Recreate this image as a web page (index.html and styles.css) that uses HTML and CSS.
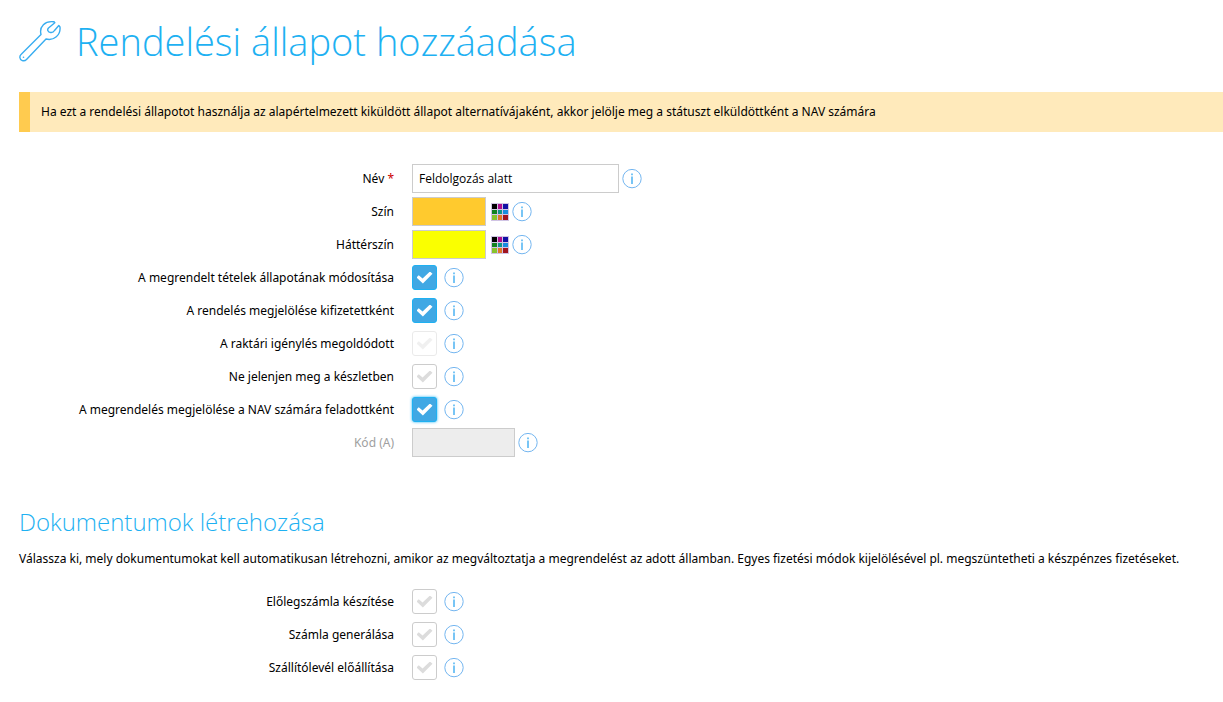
FILE: index.html
```html
<!DOCTYPE html>
<html lang="hu">
<head>
<meta charset="utf-8">
<title>Rendelési állapot hozzáadása</title>
<link rel="stylesheet" href="styles.css">
</head>
<body>
<svg class="sprite" aria-hidden="true">
  <symbol id="info" viewBox="0 0 20 20">
    <circle cx="10" cy="9.600" r="9.200" fill="none" stroke="#74b6f0" stroke-width="1"/>
    <path d="M10 7.500V15M10 4.500v1.700" fill="none" stroke="#4cb2f2" stroke-width="1.500"/>
  </symbol>
  <symbol id="palette" viewBox="0 0 18 18">
    <rect width="18" height="18" fill="#d0c4e4"/>
    <rect x="1" y="1" width="5" height="5" fill="#000"/>
    <rect x="7" y="1" width="4" height="5" fill="#b00c8c"/>
    <rect x="12" y="1" width="5" height="5" fill="#1010a4"/>
    <rect x="1" y="7" width="5" height="4" fill="#128220"/>
    <rect x="7" y="7" width="4" height="4" fill="#109488"/>
    <rect x="12" y="7" width="5" height="4" fill="#188ce0"/>
    <rect x="1" y="12" width="5" height="5" fill="#88c42c"/>
    <rect x="7" y="12" width="4" height="5" fill="#e07828"/>
    <rect x="12" y="12" width="5" height="5" fill="#a01420"/>
  </symbol>
</svg>
<main class="page">
  <h1 class="title">
    <svg class="title-icon" viewBox="0 0 42 42" aria-hidden="true">
      <path d="M22 14.500C20 6.500 26 .5 35 1.800L35.800 2.800L29.500 8C27.800 9.800 29 12.200 31.500 12.500C33.500 12.800 34.700 12 35.500 10.500L39.800 5.500L41 7C41.800 15 35 21 27 19L7.500 39.500C5 42 1 40.500 .8 37.300C.8 35.800 1.300 35 2.500 34Z" fill="none" stroke="#38adf0" stroke-width="1.400" stroke-linejoin="round"/>
      <circle cx="4.500" cy="37.300" r=".8" fill="#38adf0"/>
    </svg>
    Rendelési állapot hozzáadása
  </h1>
  <p class="notice">Ha ezt a rendelési állapotot használja az alapértelmezett kiküldött állapot alternatívájaként, akkor jelölje meg a státuszt elküldöttként a NAV számára</p>
  <form>
    <div class="rows">
      <div class="row">
        <label class="label" for="name">Név <span class="required">*</span></label>
        <div class="field"><input class="text name" id="name" type="text" value="Feldolgozás alatt" required><button class="info" type="button" aria-label="Súgó"><svg><use href="#info"/></svg></button></div>
      </div>
      <div class="row">
        <label class="label" for="color">Szín</label>
        <div class="field"><input class="text swatch orange" id="color" type="text"><button class="picker" type="button" aria-label="Színválasztó"><svg><use href="#palette"/></svg></button><button class="info" type="button" aria-label="Súgó"><svg><use href="#info"/></svg></button></div>
      </div>
      <div class="row">
        <label class="label" for="background">Háttérszín</label>
        <div class="field"><input class="text swatch yellow" id="background" type="text"><button class="picker" type="button" aria-label="Színválasztó"><svg><use href="#palette"/></svg></button><button class="info" type="button" aria-label="Súgó"><svg><use href="#info"/></svg></button></div>
      </div>
      <div class="row">
        <label class="label" for="items">A megrendelt tételek állapotának módosítása</label>
        <div class="field"><input class="check" id="items" type="checkbox" checked><button class="info" type="button" aria-label="Súgó"><svg><use href="#info"/></svg></button></div>
      </div>
      <div class="row">
        <label class="label" for="paid">A rendelés megjelölése kifizetettként</label>
        <div class="field"><input class="check" id="paid" type="checkbox" checked><button class="info" type="button" aria-label="Súgó"><svg><use href="#info"/></svg></button></div>
      </div>
      <div class="row">
        <label class="label" for="stock">A raktári igénylés megoldódott</label>
        <div class="field"><input class="check" id="stock" type="checkbox" disabled><button class="info" type="button" aria-label="Súgó"><svg><use href="#info"/></svg></button></div>
      </div>
      <div class="row">
        <label class="label" for="hidden">Ne jelenjen meg a készletben</label>
        <div class="field"><input class="check" id="hidden" type="checkbox"><button class="info" type="button" aria-label="Súgó"><svg><use href="#info"/></svg></button></div>
      </div>
      <div class="row">
        <label class="label" for="nav">A megrendelés megjelölése a NAV számára feladottként</label>
        <div class="field"><input class="check active" id="nav" type="checkbox" checked><button class="info" type="button" aria-label="Súgó"><svg><use href="#info"/></svg></button></div>
      </div>
      <div class="row">
        <label class="label muted" for="code">Kód (A)</label>
        <div class="field"><input class="text code" id="code" type="text" disabled><button class="info" type="button" aria-label="Súgó"><svg><use href="#info"/></svg></button></div>
      </div>
    </div>
    <h2 class="subtitle">Dokumentumok létrehozása</h2>
    <p class="intro">Válassza ki, mely dokumentumokat kell automatikusan létrehozni, amikor az megváltoztatja a megrendelést az adott államban. Egyes fizetési módok kijelölésével pl. megszüntetheti a készpénzes fizetéseket.</p>
    <div class="rows">
      <div class="row">
        <label class="label" for="advance">Előlegszámla készítése</label>
        <div class="field"><input class="check" id="advance" type="checkbox"><button class="info" type="button" aria-label="Súgó"><svg><use href="#info"/></svg></button></div>
      </div>
      <div class="row">
        <label class="label" for="invoice">Számla generálása</label>
        <div class="field"><input class="check" id="invoice" type="checkbox"><button class="info" type="button" aria-label="Súgó"><svg><use href="#info"/></svg></button></div>
      </div>
      <div class="row">
        <label class="label" for="delivery">Szállítólevél előállítása</label>
        <div class="field"><input class="check" id="delivery" type="checkbox"><button class="info" type="button" aria-label="Súgó"><svg><use href="#info"/></svg></button></div>
      </div>
    </div>
  </form>
</main>
</body>
</html>
```
FILE: styles.css
```css
* { box-sizing: border-box; }
body {
  margin: 0;
  background: #fff;
  color: #000;
  font: 12px/20px "Noto Sans", sans-serif;
}
.sprite { display: none; }
.page { padding: 14px 0 20px 19px; }
.title {
  display: flex;
  align-items: center;
  gap: 15px;
  margin: 0 0 24px;
  color: #1eb1f2;
  font-family: "Open Sans", sans-serif;
  font-size: 38px;
  font-weight: 300;
  line-height: 54px;
}
.title-icon { width: 42px; height: 42px; flex: none; }
.notice {
  margin: 0 0 32px;
  padding: 10px 11px;
  border-left: 11px solid #ffcb4f;
  background: #ffeabb;
}
.rows { display: grid; gap: 4px; }
.row {
  display: grid;
  grid-template-columns: 375px 1fr;
  column-gap: 18px;
  align-items: center;
  min-height: 29px;
}
.label { text-align: right; }
.required { color: #c00; }
.muted { color: #a0a0a0; }
.field { display: flex; align-items: center; }
.text {
  height: 29px;
  margin: 0;
  padding: 0 6px;
  border: 1px solid #ccc;
  border-radius: 0;
  background: #fff;
  color: #000;
  font: 12px "Open Sans", sans-serif;
}
.name { width: 207px; }
.swatch { width: 74px; }
.orange { background: #ffca2e; }
.yellow { background: #faff00; }
.code { width: 103px; background: #ededed; }
.info, .picker {
  padding: 0;
  border: 0;
  background: none;
  cursor: pointer;
}
.info { width: 20px; height: 20px; margin-left: 3px; }
.picker { width: 18px; height: 18px; margin-left: 5px; }
.info svg, .picker svg { display: block; width: 100%; height: 100%; }
.check {
  appearance: none;
  display: grid;
  place-items: center;
  width: 25px;
  height: 25px;
  margin: 0;
  border: 1px solid #ccc;
  border-radius: 3px;
  background: #fff;
}
.check::before {
  content: "";
  width: 16px;
  height: 12px;
  background: #dcdcdc;
  clip-path: polygon(0 50%, 14% 31%, 38% 59%, 84% 0, 100% 18%, 40% 100%);
}
.check:checked { border-color: #1eb1f2; background: #40a8e4; }
.check:checked::before { background: #fff; }
.check:disabled { opacity: .4; }
.active { box-shadow: 0 0 3px #1eb1f2; }
.check + .info { margin-left: 7px; }
.subtitle {
  margin: 48px 0 10px;
  color: #1eb1f2;
  font-family: "Open Sans", sans-serif;
  font-size: 24px;
  font-weight: 300;
  line-height: 34px;
}
.intro { margin: 0 0 18px; }
```
